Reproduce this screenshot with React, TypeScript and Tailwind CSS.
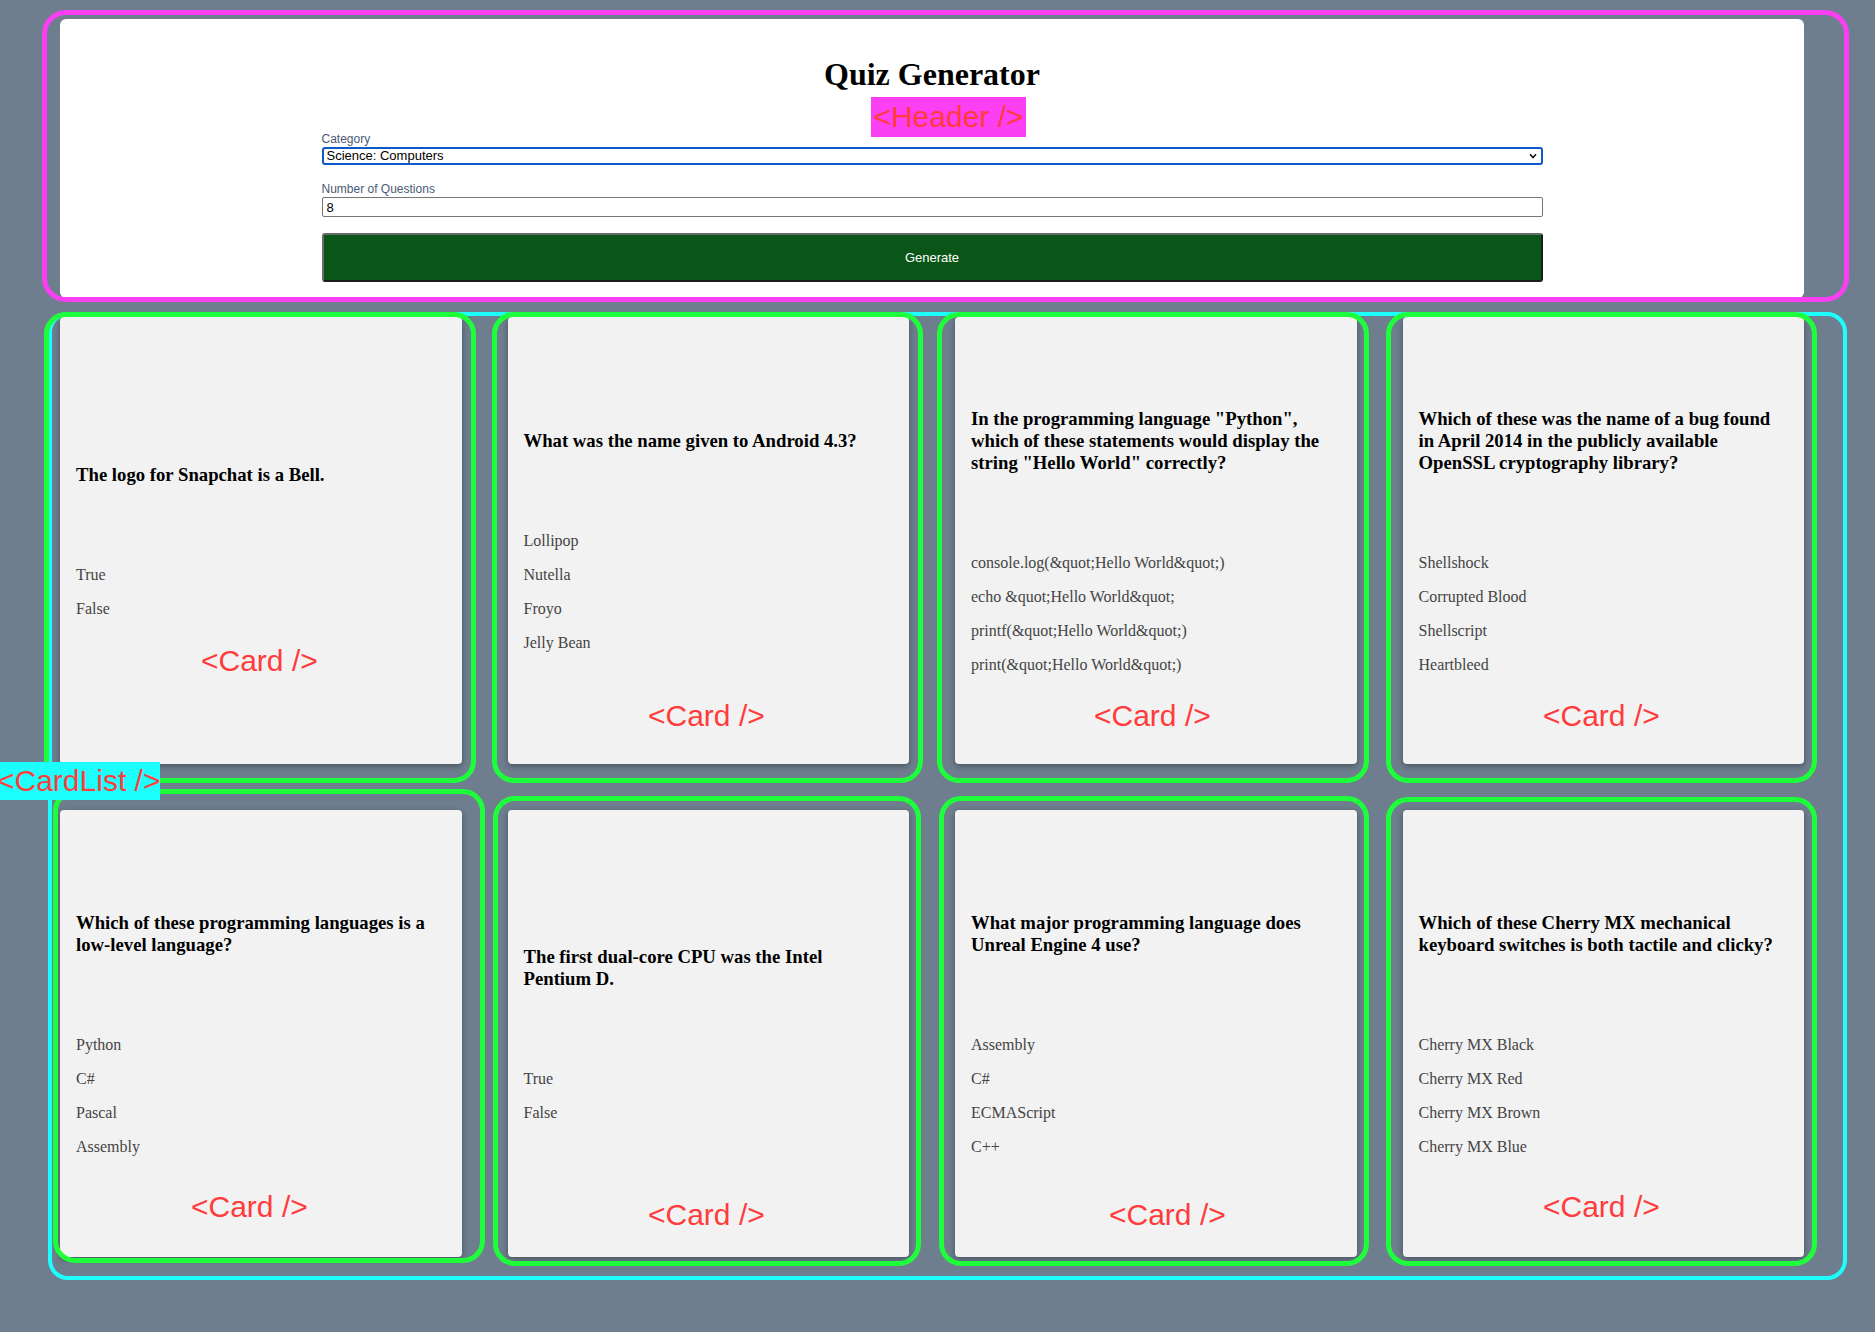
import React from "react";

const cards = [
  { q: "The logo for Snapchat is a Bell.", a: ["True", "False"] },
  {
    q: "What was the name given to Android 4.3?",
    a: ["Lollipop", "Nutella", "Froyo", "Jelly Bean"],
  },
  {
    q: 'In the programming language "Python", which of these statements would display the string "Hello World" correctly?',
    a: [
      "console.log(&quot;Hello World&quot;)",
      "echo &quot;Hello World&quot;",
      "printf(&quot;Hello World&quot;)",
      "print(&quot;Hello World&quot;)",
    ],
  },
  {
    q: "Which of these was the name of a bug found in April 2014 in the publicly available OpenSSL cryptography library?",
    a: ["Shellshock", "Corrupted Blood", "Shellscript", "Heartbleed"],
  },
  {
    q: "Which of these programming languages is a low-level language?",
    a: ["Python", "C#", "Pascal", "Assembly"],
  },
  { q: "The first dual-core CPU was the Intel Pentium D.", a: ["True", "False"] },
  {
    q: "What major programming language does Unreal Engine 4 use?",
    a: ["Assembly", "C#", "ECMAScript", "C++"],
  },
  {
    q: "Which of these Cherry MX mechanical keyboard switches is both tactile and clicky?",
    a: ["Cherry MX Black", "Cherry MX Red", "Cherry MX Brown", "Cherry MX Blue"],
  },
];

function Header() {
  return (
    <header className="flex flex-col items-center rounded-[6px] bg-white pt-[36px] pb-4">
      <h1 className="font-['Liberation_Serif',serif] text-[32px] leading-[38px] font-bold text-black">
        Quiz Generator
      </h1>
      <form className="mt-[39px] flex w-[1221px] flex-col font-['Liberation_Sans',Arial,sans-serif]">
        <label className="block text-[12px] leading-[14px] text-[#4b5a74]">Category</label>
        <div className="relative mt-[1px] h-[18px]">
          <select
            defaultValue="computers"
            className="block h-[18px] w-full appearance-none rounded-[3px] border-2 border-[#0b5bc6] bg-white pl-[3px] text-[13px] leading-[14px] text-black outline-none"
          >
            <option value="computers">Science: Computers</option>
          </select>
          <svg
            className="pointer-events-none absolute top-[6px] right-[6px]"
            width="8"
            height="6"
            viewBox="0 0 8 6"
          >
            <path d="M1 1.2 L4 4.5 L7 1.2" fill="none" stroke="#111" strokeWidth="1.6" />
          </svg>
        </div>
        <label className="mt-[17px] block text-[12px] leading-[14px] text-[#4b5a74]">
          Number of Questions
        </label>
        <input
          defaultValue="8"
          className="mt-[1px] block h-[20px] w-full rounded-[2px] border border-[#767676] bg-white px-[4px] text-[13px] text-black outline-none"
        />
        <button
          type="button"
          className="mt-[16px] block h-[49px] w-full rounded-[3px] border-2 border-t-[#6a6a6a] border-l-[#6a6a6a] border-r-[#1c1c1c] border-b-[#1c1c1c] bg-[#0a5618] text-[13px] text-white"
        >
          Generate
        </button>
      </form>
    </header>
  );
}

function Card({ q, a }: { q: string; a: string[] }) {
  return (
    <div className="flex h-[447px] flex-col justify-center rounded-[4px] bg-[#f2f2f2] px-4 shadow-[0_2px_6px_rgba(0,0,0,0.35)] font-['Liberation_Serif',serif]">
      <h3 className="pr-2 text-[18.72px] leading-[22px] font-bold text-black">{q}</h3>
      <div className="mt-[80px] flex flex-col gap-4">
        {a.map((ans) => (
          <p key={ans} className="text-[16px] leading-[18px] text-[#444]">
            {ans}
          </p>
        ))}
      </div>
    </div>
  );
}

function CardList() {
  return (
    <div className="mt-[19px] grid grid-cols-4 gap-[46px]">
      {cards.map((c) => (
        <Card key={c.q} q={c.q} a={c.a} />
      ))}
    </div>
  );
}

// dev-tools style component outlines drawn over the page
function Annotations() {
  const label = "absolute text-[30px] font-['Liberation_Sans',Arial,sans-serif] text-[#ff3b3b] whitespace-nowrap";
  const green = "absolute rounded-[22px] border-[5px] border-[#1eff3c]";
  return (
    <div className="pointer-events-none absolute inset-0">
      <div className="absolute top-[10px] left-[42px] h-[292px] w-[1807px] rounded-[24px] border-[5px] border-[#fb3ff2]" />
      <div className={`${label} top-[97px] left-[871px] h-[40px] w-[155px] bg-[#fb3ff2] text-center leading-[40px]`}>
        {"<Header />"}
      </div>

      <div className="absolute top-[312px] left-[48px] h-[968px] w-[1799px] rounded-[20px] border-[4px] border-[#1cfffd]" />

      <div className={`${green} top-[312px] left-[44px] h-[471px] w-[432px]`} />
      <div className={`${green} top-[312px] left-[492px] h-[471px] w-[431px]`} />
      <div className={`${green} top-[312px] left-[937px] h-[471px] w-[432px]`} />
      <div className={`${green} top-[312px] left-[1386px] h-[471px] w-[431px]`} />
      <div className={`${green} top-[789px] left-[53px] h-[474px] w-[432px]`} />
      <div className={`${green} top-[796px] left-[493px] h-[470px] w-[428px]`} />
      <div className={`${green} top-[796px] left-[939px] h-[470px] w-[430px]`} />
      <div className={`${green} top-[797px] left-[1386px] h-[469px] w-[431px]`} />

      <div className={`${label} top-[762px] left-[-3px] h-[38px] bg-[#1cfffd] leading-[38px]`}>
        {"<CardList />"}
      </div>

      <div className={`${label} top-[644px] left-[201px] leading-[34px]`}>{"<Card />"}</div>
      <div className={`${label} top-[699px] left-[648px] leading-[34px]`}>{"<Card />"}</div>
      <div className={`${label} top-[699px] left-[1094px] leading-[34px]`}>{"<Card />"}</div>
      <div className={`${label} top-[699px] left-[1543px] leading-[34px]`}>{"<Card />"}</div>
      <div className={`${label} top-[1190px] left-[191px] leading-[34px]`}>{"<Card />"}</div>
      <div className={`${label} top-[1198px] left-[648px] leading-[34px]`}>{"<Card />"}</div>
      <div className={`${label} top-[1198px] left-[1109px] leading-[34px]`}>{"<Card />"}</div>
      <div className={`${label} top-[1190px] left-[1543px] leading-[34px]`}>{"<Card />"}</div>
    </div>
  );
}

export default function App() {
  return (
    <div className="relative min-h-[1332px] w-full overflow-hidden bg-[#6e7e8e] pt-[19px] pb-[72px]">
      <div className="ml-[60px] w-[1744px]">
        <Header />
        <CardList />
      </div>
      <Annotations />
    </div>
  );
}
